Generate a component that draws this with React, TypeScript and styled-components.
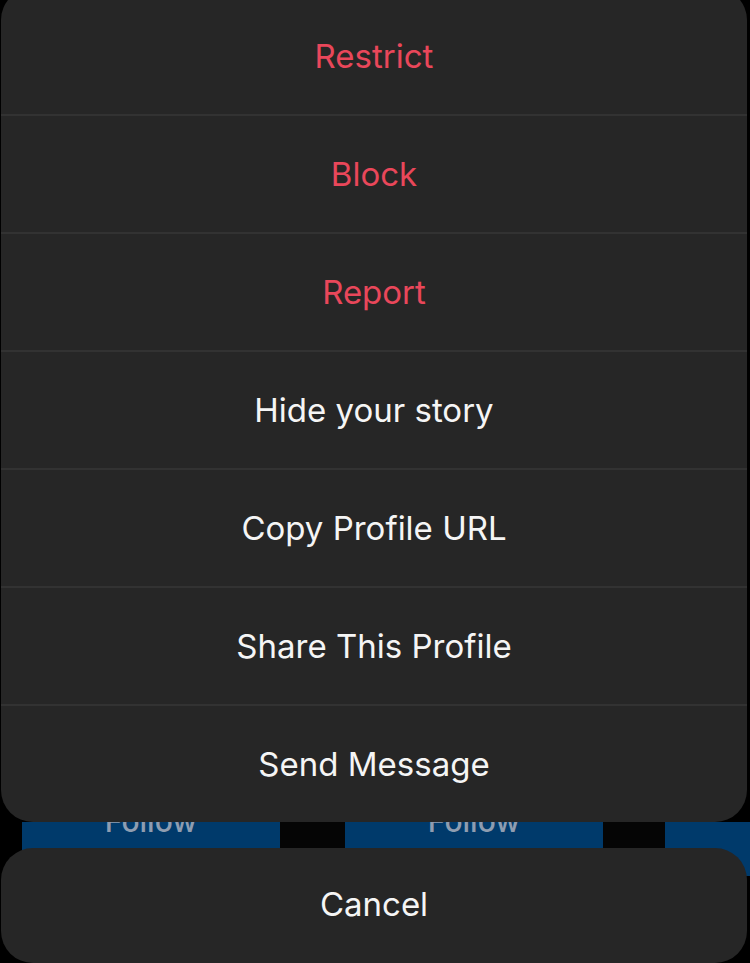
import React from "react"
import styled, { createGlobalStyle } from "styled-components"

const GlobalStyle = createGlobalStyle`
  html, body {
    margin: 0;
    padding: 0;
    background: #000;
    overflow: hidden;
  }
  body {
    font-family: Inter, "Noto Sans", "Liberation Sans", sans-serif;
    -webkit-font-smoothing: antialiased;
  }
`

const Page = styled.div`
  width: 750px;
  height: 963px;
  overflow: hidden;
  display: flex;
  flex-direction: column;
  padding: 0 3px 0 1px;
  box-sizing: border-box;
  background: #000;
`

const Sheet = styled.div`
  position: relative;
  z-index: 2;
  margin-top: -12px;
  padding-top: 10px;
  background: #262626;
  border-radius: 32px;
  display: flex;
  flex-direction: column;
`

const Row = styled.button<{ $danger?: boolean }>`
  height: 118px;
  box-sizing: border-box;
  border: 0;
  border-bottom: 2px solid #323232;
  background: transparent;
  color: ${(p) => (p.$danger ? "#e9475a" : "#f5f5f5")};
  font-family: inherit;
  font-size: 33px;
  font-weight: 400;
  display: flex;
  align-items: center;
  justify-content: center;
  padding: 0;
  &:last-child {
    border-bottom: 0;
    height: 116px;
  }
`

const Behind = styled.div`
  position: relative;
  z-index: 1;
  height: 84px;
  margin: -30px -3px -30px -1px;
  display: flex;
  overflow: hidden;
`

const FollowButton = styled.div<{ $w: number }>`
  flex: 0 0 ${(p) => p.$w}px;
  height: 54px;
  margin-top: 30px;
  background: #003a6b;
  color: #8f9db0;
  font-size: 30px;
  font-weight: 500;
  display: flex;
  align-items: flex-end;
  justify-content: center;
  line-height: 1;
  padding-bottom: 40px;
  box-sizing: border-box;
`

const Gap = styled.div<{ $w: number }>`
  flex: 0 0 ${(p) => p.$w}px;
  height: 54px;
  margin-top: 30px;
  background: #050505;
`

const Spacer = styled.div`
  flex: 0 0 22px;
`

const Cancel = styled.button`
  position: relative;
  z-index: 2;
  margin-top: 2px;
  height: 116px;
  border: 0;
  border-radius: 32px;
  background: #262626;
  color: #f5f5f5;
  font-family: inherit;
  font-size: 33px;
  font-weight: 400;
  display: flex;
  align-items: center;
  justify-content: center;
  padding: 0 0 2px;
`

const items: { label: string; danger?: boolean }[] = [
  { label: "Restrict", danger: true },
  { label: "Block", danger: true },
  { label: "Report", danger: true },
  { label: "Hide your story" },
  { label: "Copy Profile URL" },
  { label: "Share This Profile" },
  { label: "Send Message" },
]

export default function App() {
  return (
    <Page>
      <GlobalStyle />
      <Sheet>
        {items.map((it) => (
          <Row key={it.label} $danger={it.danger}>
            {it.label}
          </Row>
        ))}
      </Sheet>
      <Behind>
        <Spacer />
        <FollowButton $w={258}>Follow</FollowButton>
        <Gap $w={65} />
        <FollowButton $w={258}>Follow</FollowButton>
        <Gap $w={62} />
        <FollowButton $w={85} />
      </Behind>
      <Cancel>Cancel</Cancel>
    </Page>
  )
}
